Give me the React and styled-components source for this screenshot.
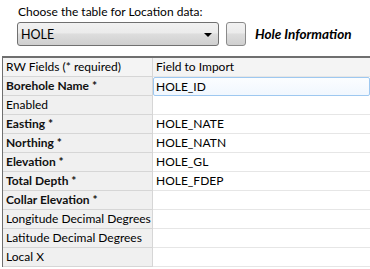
import React from "react";
import styled, { createGlobalStyle } from "styled-components";

const Global = createGlobalStyle`
  html, body { margin: 0; padding: 0; background: #fff; }
  body { font-family: Lato, "Liberation Sans", sans-serif; font-size: 12px; color: #000; }
`;

const Page = styled.div`
  display: flex;
  flex-direction: column;
  padding-top: 3px;
  width: 370px;
  height: 269px;
  overflow: hidden;
`;

const Caption = styled.div`
  padding-left: 18px;
  height: 17px;
  line-height: 17px;
  font-size: 12px;
`;

const Toolbar = styled.div`
  display: flex;
  align-items: center;
  padding-left: 17px;
  margin-top: 2px;
  height: 24px;
  gap: 7px;
`;

const Combo = styled.div`
  box-sizing: border-box;
  width: 202px;
  height: 24px;
  border: 1px solid #707070;
  border-radius: 3px;
  background: linear-gradient(#f2f2f2 0%, #ebebeb 45%, #dddddd 50%, #cfcfcf 100%);
  display: flex;
  align-items: center;
  justify-content: space-between;
  padding: 0 6px 0 3px;
  font-size: 12.5px;
`;

const Arrow = styled.span`
  width: 0;
  height: 0;
  border-left: 4px solid transparent;
  border-right: 4px solid transparent;
  border-top: 4px solid #000;
  margin-top: 1px;
`;

const SmallButton = styled.div`
  box-sizing: border-box;
  width: 20px;
  height: 24px;
  border: 1px solid #8a8a8a;
  border-radius: 3px;
  background: linear-gradient(#f2f2f2 0%, #ebebeb 45%, #dddddd 50%, #cfcfcf 100%);
`;

const Title = styled.span`
  font-weight: bold;
  font-style: italic;
  font-size: 13.5px;
  margin-left: 2px;
`;

const Table = styled.div`
  margin-top: 10px;
  margin-left: 2px;
  border-top: 2px solid #6f6f6f;
  border-left: 1px solid #6f6f6f;
  display: grid;
  grid-template-columns: 150px 1fr;
  grid-auto-rows: 19px;
`;

const Cell = styled.div`
  box-sizing: border-box;
  height: 19px;
  line-height: 18px;
  padding-left: 3px;
  font-size: 12px;
  white-space: nowrap;
  overflow: hidden;
  background: ${(p) => (p.$head ? "#f4f4f4" : p.$right ? "#fff" : "#f0f0f0")};
  border-bottom: 1px solid ${(p) => (p.$right ? "#e6e6e6" : "#d6d6d6")};
  border-right: ${(p) => (p.$right ? "none" : "1px solid #d6d6d6")};
  font-weight: ${(p) => (p.$bold ? 700 : 400)};
  color: ${(p) => (p.$bold ? "#111" : "#000")};
  ${(p) =>
    p.$selected &&
    `border: 1px solid #9ec8f0; border-radius: 2px; background: linear-gradient(#fbfdff, #f1f7fe); padding-left: 2px; line-height: 17px;`}
`;

const rows = [
  ["Borehole Name *", "HOLE_ID", true],
  ["Enabled", "", false],
  ["Easting *", "HOLE_NATE", true],
  ["Northing *", "HOLE_NATN", true],
  ["Elevation *", "HOLE_GL", true],
  ["Total Depth *", "HOLE_FDEP", true],
  ["Collar Elevation *", "", true],
  ["Longitude Decimal Degrees", "", false],
  ["Latitude Decimal Degrees", "", false],
  ["Local X", "", false],
];

export default function App() {
  return (
    <Page>
      <Global />
      <Caption>Choose the table for Location data:</Caption>
      <Toolbar>
        <Combo>
          <span>HOLE</span>
          <Arrow />
        </Combo>
        <SmallButton />
        <Title>Hole Information</Title>
      </Toolbar>
      <Table>
        <Cell $head>RW Fields (* required)</Cell>
        <Cell $head $right>Field to Import</Cell>
        {rows.map(([l, r, b], i) => (
          <React.Fragment key={i}>
            <Cell $bold={b}>{l}</Cell>
            <Cell $right $selected={i === 0}>{r}</Cell>
          </React.Fragment>
        ))}
      </Table>
    </Page>
  );
}
